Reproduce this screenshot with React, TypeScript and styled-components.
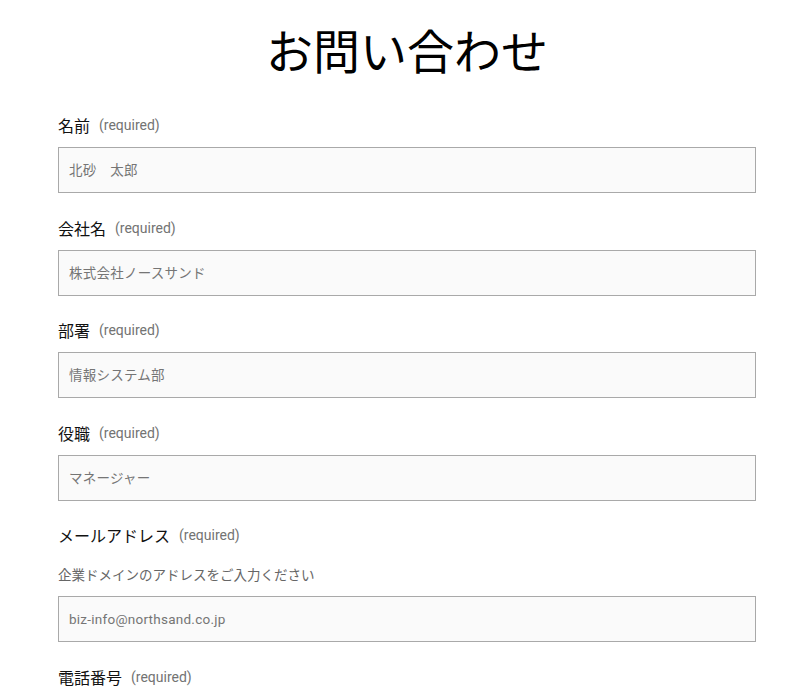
import styled, { createGlobalStyle } from 'styled-components';

const GlobalStyle = createGlobalStyle`
  body {
    margin: 0;
    background: #ffffff;
    font-family: Roboto, "Noto Sans CJK JP", sans-serif;
    color: #111;
  }
`;

const Page = styled.div`
  padding: 0 52px 0 58px;
`;

const Title = styled.h1`
  margin: 16px 0 34px;
  font-size: 47px;
  line-height: 66px;
  font-weight: 400;
  text-align: center;
  font-family: "Noto Sans CJK JP", sans-serif;
  color: #000;
`;

const Field = styled.div`
  margin-bottom: 25.5px;
`;

const LabelRow = styled.label`
  display: flex;
  align-items: center;
  height: 18px;
  line-height: 18px;
  margin-bottom: 13px;
  font-size: 16px;
  font-family: "Noto Sans CJK JP", sans-serif;
  color: #111;
`;

const Required = styled.span`
  margin-left: 9px;
  font-size: 14px;
  font-family: Roboto, sans-serif;
  color: #737373;
`;

const Hint = styled.p`
  margin: 20px 0 12px;
  font-size: 13.5px;
  line-height: 20px;
  color: #666;
  font-family: "Noto Sans CJK JP", sans-serif;
`;

const Input = styled.input`
  display: block;
  box-sizing: border-box;
  width: 100%;
  height: 46px;
  padding: 0 10px;
  border: 1px solid #a9a9a9;
  background: #fafafa;
  font-size: 13.5px;
  letter-spacing: 0.25px;
  font-family: Roboto, "Noto Sans CJK JP", sans-serif;
  color: #333;
  outline: none;

  &::placeholder {
    color: #757575;
  }
`;

type FieldDef = {
  id: string;
  label: string;
  placeholder: string;
  hint?: string;
};

const fields: FieldDef[] = [
  { id: 'name', label: '名前', placeholder: '北砂　太郎' },
  { id: 'company', label: '会社名', placeholder: '株式会社ノースサンド' },
  { id: 'dept', label: '部署', placeholder: '情報システム部' },
  { id: 'position', label: '役職', placeholder: 'マネージャー' },
  {
    id: 'email',
    label: 'メールアドレス',
    placeholder: 'biz-info@northsand.co.jp',
    hint: '企業ドメインのアドレスをご入力ください',
  },
  { id: 'tel', label: '電話番号', placeholder: '03-1234-5678' },
];

const App = () => (
  <Page>
    <GlobalStyle />
    <Title>お問い合わせ</Title>
    <form>
      {fields.map((f) => (
        <Field key={f.id}>
          <LabelRow htmlFor={f.id}>
            {f.label}
            <Required>(required)</Required>
          </LabelRow>
          {f.hint && <Hint>{f.hint}</Hint>}
          <Input id={f.id} type="text" placeholder={f.placeholder} />
        </Field>
      ))}
    </form>
  </Page>
);

export default App;
